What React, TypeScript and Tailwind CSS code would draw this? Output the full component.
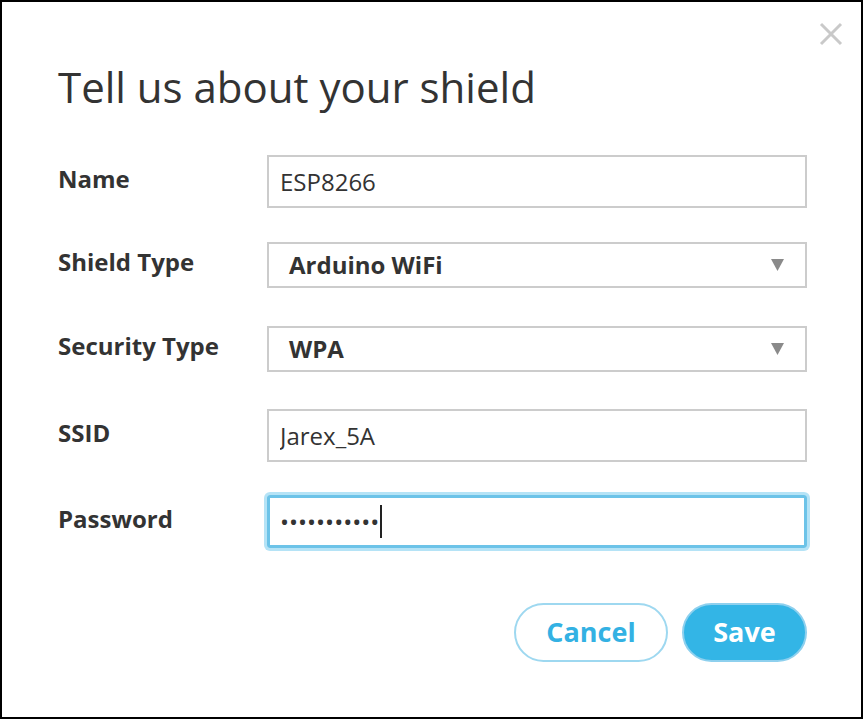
import React, { useState } from 'react';

interface FieldRowProps {
  label: string;
  className: string;
  children: React.ReactNode;
}

function FieldRow({ label, className, children }: FieldRowProps) {
  return (
    <div className={`flex items-center ${className}`}>
      <label className="w-[209px] shrink-0 pb-[6px] text-[24px] font-bold text-[#333]">{label}</label>
      <div className="flex-1">{children}</div>
    </div>
  );
}

function SelectBox({ value }: { value: string }) {
  return (
    <div className="flex h-[46px] items-center justify-between border-2 border-[#cccccc] bg-white pl-[20px] pr-[21px]">
      <span className="text-[24px] font-bold text-[#333]">{value}</span>
      <svg className="h-[12px] w-[13px]" viewBox="0 0 13 12">
        <path d="M0 0h13L6.5 12z" fill="#8a8a8a" />
      </svg>
    </div>
  );
}

export default function App() {
  const [name, setName] = useState('ESP8266');
  const [ssid, setSsid] = useState('Jarex_5A');
  const [password, setPassword] = useState('abcdefghijk');

  return (
    <div className="h-[720px] w-[865px] bg-white" style={{ fontFamily: '"Open Sans", "Liberation Sans", sans-serif' }}>
      <div className="relative h-[719px] w-[863px] border-2 border-black bg-white pl-[56px] pr-[54px] pt-[62px]">
        {/* close */}
        <button className="absolute right-[18px] top-[20px] text-[#c9c9c9]" title="Close">
          <svg className="h-[24px] w-[24px]" viewBox="0 0 24 24" fill="none" stroke="currentColor">
            <path strokeWidth={3} d="M2 2l20 20M22 2L2 22" />
          </svg>
        </button>

        <h2 className="text-[42px] leading-[46px] font-normal text-[#333]">Tell us about your shield</h2>

        <FieldRow label="Name" className="mt-[45px]">
          <input
            value={name}
            onChange={(e) => setName(e.target.value)}
            className="block h-[53px] w-full border-2 border-[#cccccc] px-[11px] text-[24px] text-[#333] outline-none"
          />
        </FieldRow>

        <FieldRow label="Shield Type" className="mt-[34px]">
          <SelectBox value="Arduino WiFi" />
        </FieldRow>

        <FieldRow label="Security Type" className="mt-[38px]">
          <SelectBox value="WPA" />
        </FieldRow>

        <FieldRow label="SSID" className="mt-[37px]">
          <input
            value={ssid}
            onChange={(e) => setSsid(e.target.value)}
            className="block h-[53px] w-full border-2 border-[#cccccc] px-[11px] text-[24px] text-[#333] outline-none"
          />
        </FieldRow>

        <FieldRow label="Password" className="mt-[33px]">
          <div className="flex h-[53px] w-full items-center rounded-[3px] border-[3px] border-[#6cc3e8] px-[10px] shadow-[0_0_0_3px_rgba(150,215,242,0.7)]">
            <span className="text-[24px] leading-none text-[#333]">
              {'•'.repeat(password.length)}
            </span>
            <span className="ml-[1px] h-[33px] w-[2px] bg-[#222]" />
          </div>
        </FieldRow>

        <div className="mt-[55px] flex justify-end gap-[14px]">
          <button className="h-[59px] w-[154px] rounded-full border-2 border-[#9ed8f0] bg-white text-[27px] font-bold text-[#33b1e3]">
            Cancel
          </button>
          <button
            onClick={() => setPassword(password)}
            className="h-[59px] w-[125px] rounded-full border-2 border-[#8ed0ee] bg-[#33b5e6] text-[27px] font-bold text-white"
          >
            Save
          </button>
        </div>
      </div>
    </div>
  );
}
